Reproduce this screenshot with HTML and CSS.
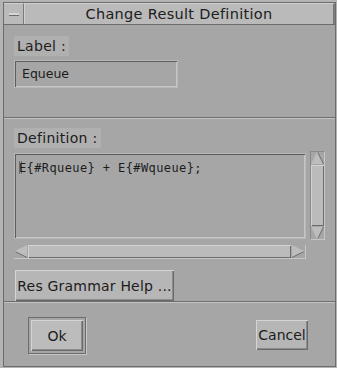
FILE: index.html
```html
<!DOCTYPE html>
<html lang="en">
<head>
  <meta charset="UTF-8" />
  <title>Change Result Definition</title>
  <link rel="stylesheet" href="styles.css">
</head>
<body>

<div class="window">
  <div class="frame">
    <div class="titlebar">
      <div class="menu-btn"><span class="dash"></span></div>
      <div class="title">Change Result Definition</div>
    </div>

    <div class="section top">
      <div class="label">Label :</div>
      <div class="field">Equeue</div>
    </div>

    <div class="sep"></div>

    <div class="section middle">
      <div class="label">Definition :</div>
      <div class="editor">
        <div class="text-col">
          <div class="textarea"><span class="caret"></span>E{#Rqueue} + E{#Wqueue};</div>
          <div class="hscroll">
            <div class="arrow left"></div>
            <div class="thumb"></div>
            <div class="arrow right"></div>
          </div>
        </div>
        <div class="vscroll">
          <div class="arrow up"></div>
          <div class="thumb"></div>
          <div class="arrow down"></div>
        </div>
      </div>
      <button class="btn help">Res Grammar Help ...</button>
    </div>

    <div class="sep"></div>

    <div class="section actions">
      <div class="default-ring"><button class="btn ok">Ok</button></div>
      <button class="btn cancel">Cancel</button>
    </div>
  </div>
</div>

</body>
</html>
```

FILE: styles.css
```css
body {
  margin: 0;
  background: #a6a6a6;
  font-family: "DejaVu Sans", sans-serif;
  color: #1c1c1c;
}

.window {
  box-sizing: border-box;
  width: 337px;
  height: 368px;
  border-style: solid;
  border-color: #b4b4b4;
  border-width: 2px 1px 1px 3px;
  background: #a6a6a6;
}

.frame {
  box-sizing: border-box;
  height: 100%;
  border: 1px solid #6c6c6c;
  display: flex;
  flex-direction: column;
}

/* title bar */
.titlebar {
  display: flex;
  height: 21px;
  border-bottom: 1px solid #6c6c6c;
  background: #bababa;
}

.menu-btn {
  box-sizing: border-box;
  width: 20px;
  border-right: 1px solid #7a7a7a;
  border-top: 1px solid #d0d0d0;
  display: flex;
  align-items: center;
  justify-content: center;
}

.dash {
  display: block;
  width: 10px;
  height: 2px;
  background: #d6d6d6;
  border-bottom: 1px solid #6c6c6c;
}

.title {
  flex: 1;
  text-align: center;
  font-size: 14.5px;
  letter-spacing: 0.3px;
  line-height: 21px;
  border-top: 1px solid #d0d0d0;
  border-left: 1px solid #d0d0d0;
  border-right: 2px solid #7a7a7a;
  color: #202020;
}

/* sections */
.section {
  padding: 0 10px;
}

.section.top {
  height: 92px;
  padding-top: 11px;
  box-sizing: border-box;
}

.section.middle {
  flex: 1;
  padding-top: 9px;
}

.sep {
  height: 1px;
  border-top: 1px solid #6e6e6e;
  background: #c4c4c4;
}

.label {
  display: inline-block;
  background: #b0b0b0;
  font-size: 14px;
  letter-spacing: 0.3px;
  line-height: 20px;
  padding: 0 3px;
}

.field {
  box-sizing: border-box;
  width: 164px;
  height: 28px;
  margin-top: 4px;
  border: 1px solid #b8b8b8;
  box-shadow: inset 1px 1px 0 #5e5e5e, inset -1px -1px 0 #c6c6c6;
  font-size: 12.5px;
  line-height: 26px;
  padding-left: 7px;
}

/* definition editor */
.editor {
  display: flex;
  gap: 4px;
  margin-top: 5px;
}

.text-col {
  width: 292px;
}

.textarea {
  box-sizing: border-box;
  height: 86px;
  border: 1px solid #b8b8b8;
  box-shadow: inset 1px 1px 0 #5e5e5e, inset -1px -1px 0 #c6c6c6;
  font-family: "DejaVu Sans Mono", monospace;
  font-size: 12px;
  padding: 7px 0 0 4px;
  letter-spacing: 0.4px;
}

.caret {
  display: inline-block;
  width: 1px;
  height: 13px;
  vertical-align: -2px;
  border: 1px solid #6a6a6a;
  border-width: 0 1px;
  margin-right: -3px;
}

.hscroll {
  box-sizing: border-box;
  display: flex;
  height: 14px;
  margin-top: 6px;
  border-bottom: 1px solid #c6c6c6;
  border-right: 1px solid #c6c6c6;
}

.vscroll {
  box-sizing: border-box;
  display: flex;
  flex-direction: column;
  width: 15px;
  height: 89px;
  margin-top: -2px;
  border: 1px solid #8a8a8a;
  border-right-color: #c6c6c6;
  border-bottom-color: #c6c6c6;
}

.thumb {
  flex: 1;
  background: #bbbbbb;
  box-shadow: inset 1px 1px 0 #d2d2d2, inset -1px -1px 0 #6c6c6c;
}

.arrow.left,
.arrow.right {
  width: 14px;
  height: 13px;
  position: relative;
}

.arrow.up,
.arrow.down {
  height: 13px;
  position: relative;
}

.arrow::before {
  content: "";
  position: absolute;
  width: 0;
  height: 0;
  border: 6px solid transparent;
}

.arrow.left::before {
  left: 1px;
  top: 0;
  border-left: 0;
  border-right: 12px solid #bdbdbd;
  filter: drop-shadow(0 1px 0 #6c6c6c);
}

.arrow.right::before {
  left: 1px;
  top: 0;
  border-right: 0;
  border-left: 12px solid #bdbdbd;
  filter: drop-shadow(0 1px 0 #6c6c6c);
}

.arrow.up::before {
  left: 0;
  top: 0;
  border-top: 0;
  border-bottom: 12px solid #bdbdbd;
  filter: drop-shadow(1px 0 0 #6c6c6c);
}

.arrow.down::before {
  left: 0;
  top: 1px;
  border-bottom: 0;
  border-top: 12px solid #bdbdbd;
  filter: drop-shadow(1px 0 0 #6c6c6c);
}

/* buttons */
.btn {
  box-sizing: border-box;
  font-family: "DejaVu Sans", sans-serif;
  color: #1c1c1c;
  background: #b6b6b6;
  border: 0;
  box-shadow: inset 1px 1px 0 #d4d4d4, inset -1px -1px 0 #6a6a6a, inset -2px -2px 0 #8c8c8c;
  padding: 0;
  margin: 0;
}

.btn.help {
  display: block;
  width: 159px;
  height: 31px;
  margin-top: 11px;
  margin-left: 1px;
  font-size: 14px;
  letter-spacing: 0.2px;
}

.section.actions {
  flex: 1;
  display: flex;
  justify-content: space-between;
  align-items: center;
  padding: 0 27px 0 24px;
}

.default-ring {
  box-sizing: border-box;
  width: 58px;
  height: 37px;
  padding: 2px;
  border: 1px solid #6c6c6c;
  box-shadow: 1px 1px 0 #c6c6c6;
  margin-top: 2px;
}

.btn.ok {
  width: 100%;
  height: 100%;
  font-size: 14px;
  background: #bcbcbc;
}

.btn.cancel {
  width: 52px;
  height: 30px;
  font-size: 14px;
  margin-top: 1px;
}
```
